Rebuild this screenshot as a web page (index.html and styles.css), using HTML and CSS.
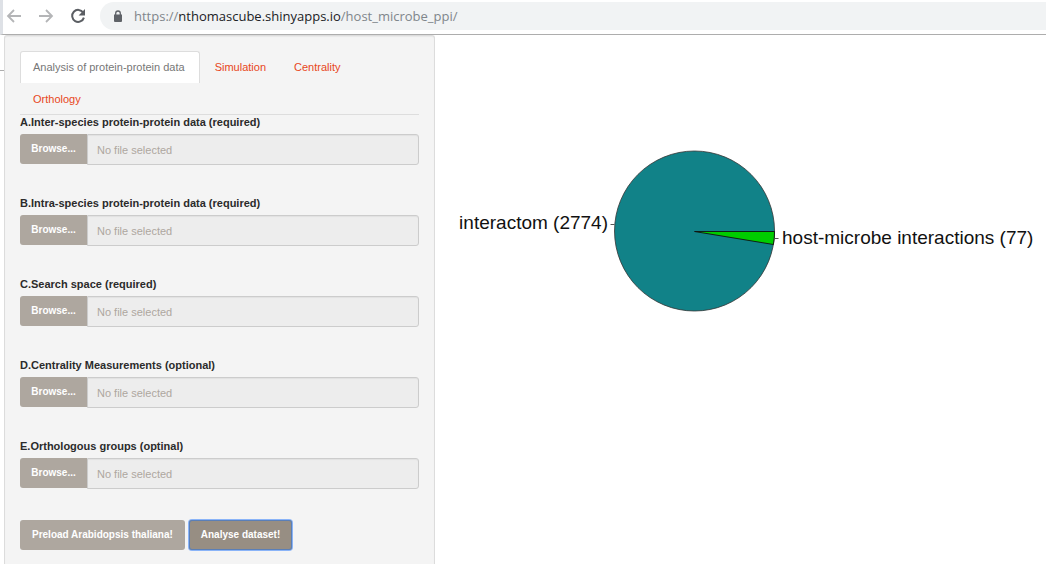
FILE: index.html
```html
<!DOCTYPE html>
<html lang="en">
<head>
<meta charset="utf-8">
<title>Host-microbe PPI</title>
<link rel="stylesheet" href="styles.css">
</head>
<body>
<header class="toolbar">
  <button class="nav-btn" type="button" aria-label="Back">
    <svg width="16" height="16" viewBox="0 0 16 16"><path d="M15 8H2M8 2L2 8l6 6" fill="none" stroke="#b4b5b7" stroke-width="1.8"/></svg>
  </button>
  <button class="nav-btn" type="button" aria-label="Forward">
    <svg width="16" height="16" viewBox="0 0 16 16"><path d="M1 8h13M8 2l6 6-6 6" fill="none" stroke="#b4b5b7" stroke-width="1.8"/></svg>
  </button>
  <button class="nav-btn" type="button" aria-label="Reload">
    <svg width="16" height="16" viewBox="0 0 16 16"><path d="M13.2 4.6A6 6 0 1 0 13.9 9.6" fill="none" stroke="#5b5e63" stroke-width="2"/><path d="M15 1v6.4H8.6z" fill="#5b5e63"/></svg>
  </button>
  <div class="omnibox">
    <svg class="lock" width="10" height="13" viewBox="0 0 10 13"><rect x="1" y="5" width="8" height="7" rx="1" fill="#5f6368"/><path d="M2.7 5.500V3.300a2.300 2.300 0 0 1 4.600 0v2.200" fill="none" stroke="#5f6368" stroke-width="1.300"/><rect x="1" y="4.500" width="8" height="2" fill="#5f6368"/></svg>
    <div class="url" role="textbox" contenteditable="true" spellcheck="false" aria-label="Address"><span class="muted">https://</span>nthomascube.shinyapps.io<span class="muted">/host_microbe_ppi/</span></div>
  </div>
</header>
<main class="page">
  <div class="edge"></div>
  <form class="panel">
    <nav class="tabs">
      <a class="tab active" href="#analysis">Analysis of protein-protein data</a>
      <a class="tab" href="#simulation">Simulation</a>
      <a class="tab" href="#centrality">Centrality</a>
      <a class="tab" href="#orthology">Orthology</a>
    </nav>
    <div class="field">
      <label for="inter">A.Inter-species protein-protein data (required)</label>
      <div class="file"><button class="browse" type="button">Browse...</button><input id="inter" class="name" type="text" placeholder="No file selected" readonly></div>
    </div>
    <div class="field">
      <label for="intra">B.Intra-species protein-protein data (required)</label>
      <div class="file"><button class="browse" type="button">Browse...</button><input id="intra" class="name" type="text" placeholder="No file selected" readonly></div>
    </div>
    <div class="field">
      <label for="space">C.Search space (required)</label>
      <div class="file"><button class="browse" type="button">Browse...</button><input id="space" class="name" type="text" placeholder="No file selected" readonly></div>
    </div>
    <div class="field">
      <label for="measures">D.Centrality Measurements (optional)</label>
      <div class="file"><button class="browse" type="button">Browse...</button><input id="measures" class="name" type="text" placeholder="No file selected" readonly></div>
    </div>
    <div class="field">
      <label for="groups">E.Orthologous groups (optinal)</label>
      <div class="file"><button class="browse" type="button">Browse...</button><input id="groups" class="name" type="text" placeholder="No file selected" readonly></div>
    </div>
    <div class="actions">
      <button class="btn" type="button">Preload Arabidopsis thaliana!</button>
      <button class="btn pressed" type="button">Analyse dataset!</button>
    </div>
  </form>
  <section class="plot">
    <svg class="pie" viewBox="0 0 611 300" role="img" aria-label="Interaction counts">
      <circle cx="259.500" cy="196" r="80" fill="#118288" stroke="#333" stroke-width="0.8"/>
      <path d="M259.500 196.500H339.500A80 80 0 0 1 338.400 209.500Z" fill="#00cd00" stroke="#111" stroke-width="0.9"/>
      <path d="M175.500 189.500h4M339.500 203.500h4" stroke="#555" stroke-width="1"/>
      <text class="slice" x="173" y="194" text-anchor="end">interactom (2774)</text>
      <text class="slice" x="347" y="209">host-microbe interactions (77)</text>
    </svg>
  </section>
</main>
</body>
</html>
```
FILE: styles.css
```css
* { box-sizing: border-box; }
body {
  margin: 0;
  background: #fff;
  color: #2b2b2b;
  font: 11px/16px "Liberation Sans", Arial, sans-serif;
}
.toolbar {
  display: flex;
  align-items: center;
  height: 35px;
  padding: 0 0 2px 3px;
  border-left: 3px solid #dee1e6;
  border-bottom: 1px solid #adadad;
}
.nav-btn {
  display: flex;
  width: 16px;
  height: 16px;
  margin-right: 16px;
  padding: 0;
  border: 0;
  background: none;
}
.omnibox {
  display: flex;
  flex: 1;
  align-items: center;
  gap: 11px;
  height: 28px;
  margin-left: -2px;
  padding-left: 13px;
  border-radius: 14px 0 0 14px;
  background: #f1f3f4;
}
.url {
  color: #202124;
  font: 13px/20px "Open Sans", "Noto Sans", sans-serif;
  white-space: nowrap;
}
.muted { color: #80868b; }
.page { display: flex; align-items: flex-start; }
.edge {
  width: 4px;
  height: 36px;
  border-bottom: 1px solid #adadad;
}
.panel {
  width: 41.2%;
  padding: 15px 15px 14px;
  border: 1px solid #dcdcdc;
  border-bottom: 0;
  border-radius: 3px 3px 0 0;
  background: #f4f4f4;
  box-shadow: inset 0 1px 1px rgba(0, 0, 0, 0.05);
}
.tabs {
  display: flex;
  flex-wrap: wrap;
  align-content: flex-start;
  height: 64px;
  border-bottom: 1px solid #ddd;
}
.tab {
  margin-right: 2px;
  padding: 7px 12px 8px;
  border: 1px solid transparent;
  border-bottom: 0;
  border-radius: 3px 3px 0 0;
  color: #e8471b;
  text-decoration: none;
}
.tab.active {
  padding-right: 14px;
  border-color: #ddd;
  background: #fff;
  color: #777;
}
.field { margin-bottom: 31px; }
.field label {
  display: block;
  height: 19px;
  font-weight: bold;
  line-height: 14px;
}
.file { display: flex; align-items: flex-start; }
.browse, .btn {
  height: 30px;
  padding: 0 12px;
  border: 0;
  border-radius: 3px;
  background: #aea79f;
  color: #fff;
  font: bold 10px/16px "Liberation Sans", Arial, sans-serif;
}
.browse {
  width: 67px;
  padding: 0;
  border-radius: 3px 0 0 3px;
}
.name {
  flex: 1;
  min-width: 0;
  height: 31px;
  padding: 1px 10px 0 9px;
  border: 1px solid #ccc;
  border-radius: 0 3px 3px 0;
  background: #ededed;
  box-shadow: inset 0 1px 1px rgba(0, 0, 0, 0.05);
  font: 11px/16px "Liberation Sans", Arial, sans-serif;
}
.name::placeholder { color: #aea79f; opacity: 1; }
.actions { display: flex; gap: 4px; }
.pressed {
  background: #978e83;
  box-shadow: inset 0 0 0 1px #5a7fb8, 0 0 0 1px #8ab4f8;
}
.plot { flex: 1; min-width: 0; }
.pie { display: block; width: 100%; }
.slice {
  fill: #111;
  font: 19px "Liberation Sans", Arial, sans-serif;
}
```
